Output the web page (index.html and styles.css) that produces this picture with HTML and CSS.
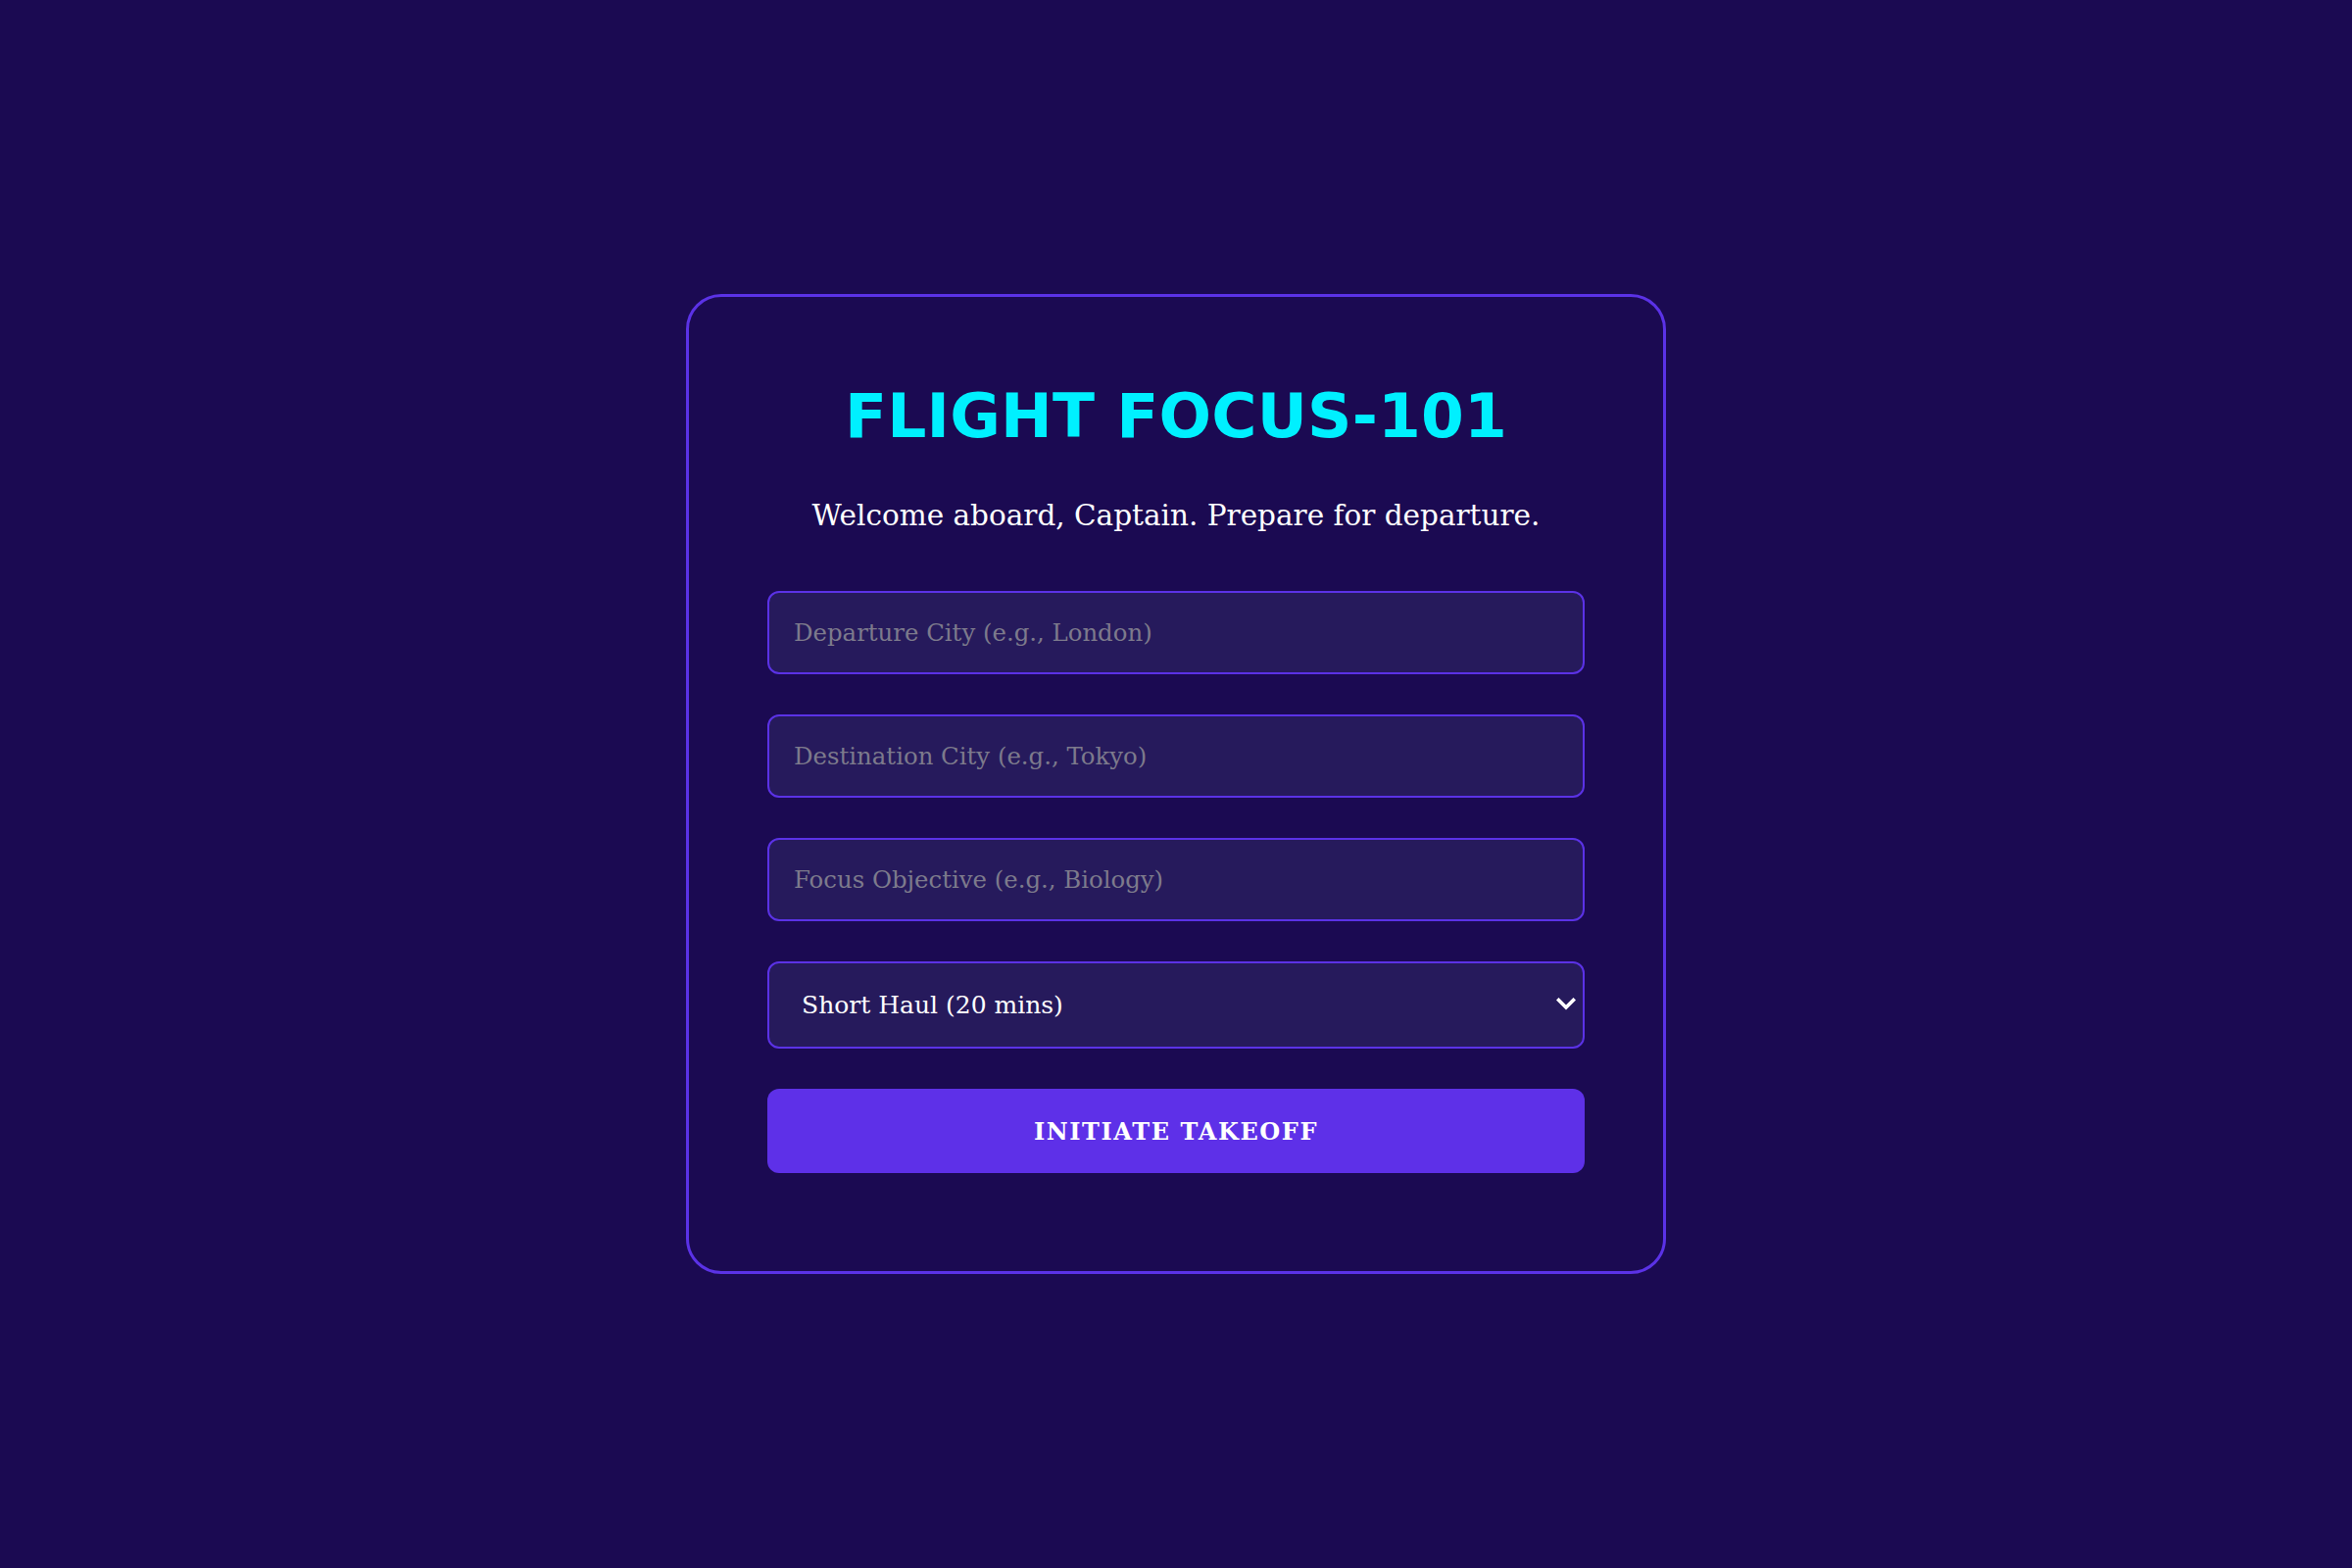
FILE: index.html
```html
<!DOCTYPE html>
<html lang="en">
<head>
<meta charset="utf-8">
<title>Flight Focus-101</title>
<link rel="stylesheet" href="styles.css">
</head>
<body>
<main class="card">
  <h1 class="title">FLIGHT FOCUS-101</h1>
  <p class="welcome">Welcome aboard, Captain. Prepare for departure.</p>
  <form class="form">
    <input class="field" type="text" placeholder="Departure City (e.g., London)">
    <input class="field" type="text" placeholder="Destination City (e.g., Tokyo)">
    <input class="field" type="text" placeholder="Focus Objective (e.g., Biology)">
    <div class="select-wrap">
      <select class="field select">
        <option>Short Haul (20 mins)</option>
        <option>Medium Haul (45 mins)</option>
        <option>Long Haul (90 mins)</option>
      </select>
      <svg class="chevron" width="20" height="14" viewBox="0 0 20 14" aria-hidden="true">
        <path d="M2.5 2.5 L10 10 L17.5 2.5" fill="none" stroke="#ffffff" stroke-width="3.6" stroke-linecap="square" stroke-linejoin="miter"/>
      </svg>
    </div>
    <button class="takeoff" type="button">Initiate Takeoff</button>
  </form>
</main>
</body>
</html>
```

FILE: styles.css
```css
* { box-sizing: border-box; }
html, body { margin: 0; padding: 0; }
body {
  min-height: 100vh;
  background: #1b0a52;
  display: flex;
  align-items: center;
  justify-content: center;
  font-family: "DejaVu Serif", "Liberation Serif", serif;
  color: #ffffff;
}
.card {
  width: 1000px;
  border: 3px solid #5b32e6;
  border-radius: 36px;
  padding: 80px 80px 100px;
  background: #1b0a52;
  text-align: center;
}
.title {
  margin: 0;
  font-family: "DejaVu Sans", sans-serif;
  font-weight: 700;
  font-size: 63px;
  line-height: 84px;
  color: #00f0ff;
  letter-spacing: 0.2px;
}
.welcome {
  margin: 39px 0 57px;
  font-size: 29.5px;
  line-height: 40px;
  color: #ffffff;
}
.form {
  display: flex;
  flex-direction: column;
  gap: 41px;
}
.field {
  width: 100%;
  height: 85px;
  padding: 0 25px;
  border: 2px solid #5b32e6;
  border-radius: 12px;
  background: #261a5c;
  color: #ffffff;
  font-family: "DejaVu Serif", "Liberation Serif", serif;
  font-size: 24.4px;
  outline: none;
}
.field::placeholder { color: #7d7a8c; }
.select-wrap { position: relative; }
.select {
  display: block;
  height: 89px;
  padding: 0 60px 0 33px;
  appearance: none;
  -webkit-appearance: none;
  font-size: 25px;
}
.chevron {
  position: absolute;
  right: 9px;
  top: 37px;
  pointer-events: none;
}
.takeoff {
  height: 86px;
  border: none;
  border-radius: 12px;
  background: #5e30e8;
  color: #ffffff;
  font-family: "DejaVu Serif", "Liberation Serif", serif;
  font-weight: 700;
  font-size: 24px;
  letter-spacing: 1.6px;
  text-transform: uppercase;
}
```
